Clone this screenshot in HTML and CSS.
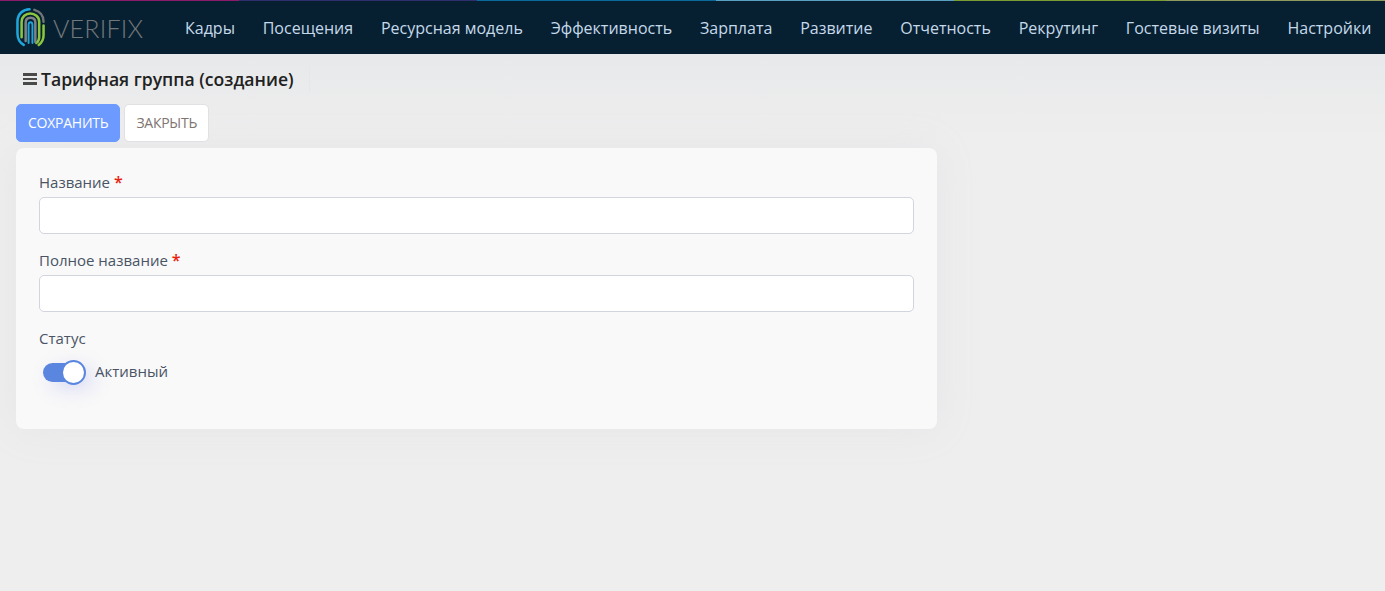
FILE: index.html
```html
<!DOCTYPE html>
<html lang="ru">
<head>
<meta charset="utf-8">
<title>Тарифная группа (создание)</title>
<link rel="stylesheet" href="styles.css">
</head>
<body>
<header class="topbar">
  <div class="stripe"><i class="s1"></i><i class="s2"></i><i class="s3"></i><i class="s4"></i><i class="s5"></i><i class="s6"></i></div>
  <div class="bar">
    <a class="brand" href="#">
      <svg class="brand-icon" viewBox="0 0 30 42" width="29" height="41" fill="none" stroke-width="2.6" stroke-linecap="round">
        <path d="M8 39C3.500 36.500 1.500 32 1.500 27V15C1.500 7 7.500 2 14 2" stroke="#1fa7dc"/>
        <path d="M19 2.800C25 4.500 28.500 9 28.500 15" stroke="#6f7478"/>
        <path d="M28.500 19V29C28.500 33 27 36.500 23.500 39" stroke="#8cc63f"/>
        <path d="M5.800 31V15C5.800 10 10 6.500 14.800 6.500C19.500 6.500 24 10 24 15V31C24 33.500 23 35.500 21 37" stroke="#8cc63f"/>
        <path d="M10 35V16C10 13 12 11 15 11C18 11 20 13 20 16V36" stroke="#7d8286"/>
        <path d="M13 37V18.500C13 16.500 14 15.500 15 15.500C16 15.500 17 16.500 17 18.500V37" stroke="#1fa7dc" stroke-width="2"/>
      </svg>
      <span class="brand-name">VERIFIX</span>
    </a>
    <nav class="menu">
      <a href="#">Кадры</a>
      <a href="#">Посещения</a>
      <a href="#">Ресурсная модель</a>
      <a href="#">Эффективность</a>
      <a href="#">Зарплата</a>
      <a href="#">Развитие</a>
      <a href="#">Отчетность</a>
      <a href="#">Рекрутинг</a>
      <a href="#">Гостевые визиты</a>
      <a href="#">Настройки</a>
    </nav>
  </div>
</header>
<main class="content">
  <div class="title-row">
    <span class="burger"><i></i><i></i><i></i></span>
    <h1 class="title">Тарифная группа (создание)</h1>
    <span class="divider"></span>
  </div>
  <div class="actions">
    <button class="btn btn-primary" type="button">СОХРАНИТЬ</button>
    <button class="btn btn-light" type="button">ЗАКРЫТЬ</button>
  </div>
  <form class="card">
    <div class="field">
      <label class="label">Название <span class="req">*</span></label>
      <input class="input" type="text">
    </div>
    <div class="field">
      <label class="label">Полное название <span class="req">*</span></label>
      <input class="input" type="text">
    </div>
    <div class="field">
      <label class="label">Статус</label>
      <div class="switch-row">
        <span class="switch"><span class="knob"></span></span>
        <span class="switch-text">Активный</span>
      </div>
    </div>
  </form>
</main>
</body>
</html>
```
FILE: styles.css
```css
* { box-sizing: border-box; }
html, body { height: 100%; }
body {
  margin: 0;
  background: linear-gradient(180deg, #e8e9ea 54px, #eeeeef 140px);
  font-family: "Open Sans", "Noto Sans", sans-serif;
  color: #3f4254;
  overflow: hidden;
}
.topbar {
  height: 54px;
  display: flex;
  flex-direction: column;
  background: #072031;
}
.stripe { display: flex; height: 1px; flex: none; }
.stripe i { flex: 0 0 238.500px; }
.stripe .s5 { flex: 0 0 212px; }
.stripe .s6 { flex: 1; }
.s1 { background: #8c1a6a; }
.s2 { background: #2f2f6e; }
.s3 { background: #0a6a9c; }
.s4 { background: #5aa0c0; }
.s5 { background: #7a9c30; }
.s6 { background: #8f9a5c; }
.bar { flex: 1; display: flex; align-items: center; padding-left: 16px; }
.brand { display: flex; align-items: center; text-decoration: none; width: 169px; flex: none; }
.brand-icon { flex: none; margin-top: -1px; }
.brand-name {
  margin-left: 8px;
  font-family: "Lato", sans-serif;
  font-weight: 300;
  font-size: 25px;
  letter-spacing: 0.2px;
  color: #72777a;
}
.menu { display: flex; gap: 27.800px; }
.menu a {
  color: #c5d9ea;
  font-size: 16px;
  line-height: 20px;
  text-decoration: none;
  white-space: nowrap;
}
.content { padding: 0 16px; }
.title-row { display: flex; align-items: center; height: 50px; padding-left: 7px; }
.burger { display: flex; flex-direction: column; gap: 2px; width: 14px; margin-right: 4px; }
.burger i { display: block; height: 2.500px; background: #4a4a4a; }
.title {
  margin: 0;
  font-size: 17.600px;
  font-weight: 600;
  color: #212121;
  line-height: 24px;
}
.divider { width: 1px; height: 26px; margin-left: 15px; background: #e7e7e9; }
.actions { display: flex; gap: 4px; height: 38px; }
.btn {
  font-family: inherit;
  font-size: 14px;
  letter-spacing: -0.250px;
  height: 38px;
  border-radius: 5px;
  padding: 0 11px 1px;
}
.btn-primary { background: #6c9aff; border: 1px solid #6c9aff; color: #fff; }
.btn-light { background: #fff; border: 1px solid #e1e1e4; color: #7e7471; }
.card {
  width: 921px;
  height: 281px;
  margin-top: 6px;
  padding: 24px 23px;
  background: #f9f9f9;
  border-radius: 8px;
  box-shadow: 0 0 40px rgba(180, 180, 190, 0.12);
}
.field { margin-bottom: 16px; }
.label {
  display: block;
  font-size: 15px;
  line-height: 20px;
  margin-bottom: 5px;
  color: #495465;
}
.req { color: #e8210f; font-size: 16px; font-weight: 600; }
.input {
  display: block;
  width: 100%;
  height: 37px;
  background: #fff;
  border: 1px solid #d3d5de;
  border-radius: 5px;
}
.switch-row { display: flex; align-items: center; height: 26px; margin-top: 11px; padding-left: 4px; }
.switch {
  position: relative;
  width: 42px;
  height: 19px;
  border-radius: 10px;
  background: #5a86e0;
  box-shadow: 8px 6px 20px rgba(110, 120, 230, 0.25);
  flex: none;
}
.knob {
  position: absolute;
  top: -3px;
  right: -1px;
  width: 25px;
  height: 25px;
  border-radius: 50%;
  background: #fff;
  border: 2px solid #5a86e0;
}
.switch-text { margin-left: 10px; margin-top: -3px; font-size: 15px; color: #495465; }
```
